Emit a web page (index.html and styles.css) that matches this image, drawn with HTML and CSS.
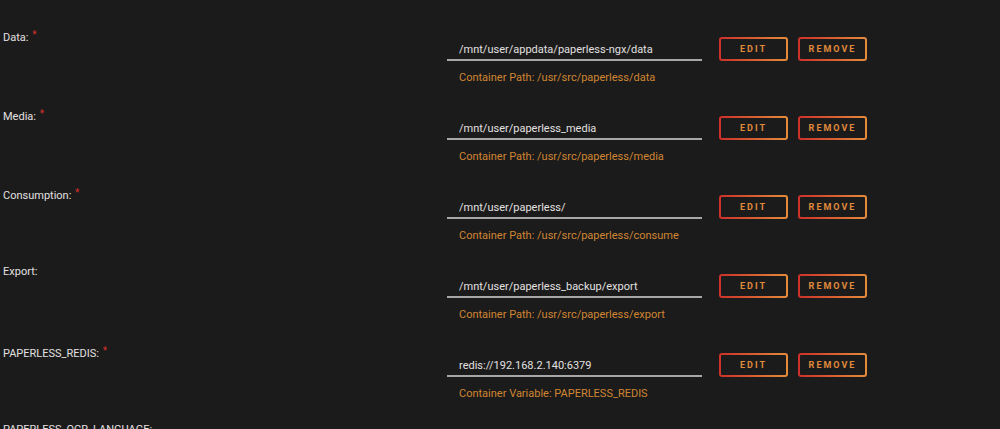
FILE: index.html
```html
<!DOCTYPE html>
<html>
<head>
	<title>Paperless-ngx - Update Container</title>
	<meta charset="utf-8">
	<link rel="stylesheet" href="styles.css">
</head>
<body>

<div id="wrapper">

	<div class="row first">
		<div class="lbl"></div>
		<div class="field">
			<div class="help">Container Port: 8000</div>
		</div>
	</div>

	<div class="row">
		<div class="lbl">Data: <span class="req">*</span></div>
		<div class="field">
			<div class="line">
				<input type="text" value="/mnt/user/appdata/paperless-ngx/data"/>
				<button class="btn">Edit</button>
				<button class="btn">Remove</button>
			</div>
			<div class="help">Container Path: /usr/src/paperless/data</div>
		</div>
	</div>

	<div class="row">
		<div class="lbl">Media: <span class="req">*</span></div>
		<div class="field">
			<div class="line">
				<input type="text" value="/mnt/user/paperless_media"/>
				<button class="btn">Edit</button>
				<button class="btn">Remove</button>
			</div>
			<div class="help">Container Path: /usr/src/paperless/media</div>
		</div>
	</div>

	<div class="row">
		<div class="lbl">Consumption: <span class="req">*</span></div>
		<div class="field">
			<div class="line">
				<input type="text" value="/mnt/user/paperless/"/>
				<button class="btn">Edit</button>
				<button class="btn">Remove</button>
			</div>
			<div class="help">Container Path: /usr/src/paperless/consume</div>
		</div>
	</div>

	<div class="row">
		<div class="lbl">Export:</div>
		<div class="field">
			<div class="line">
				<input type="text" value="/mnt/user/paperless_backup/export"/>
				<button class="btn">Edit</button>
				<button class="btn">Remove</button>
			</div>
			<div class="help">Container Path: /usr/src/paperless/export</div>
		</div>
	</div>

	<div class="row">
		<div class="lbl">PAPERLESS_REDIS: <span class="req">*</span></div>
		<div class="field">
			<div class="line">
				<input type="text" value="redis://192.168.2.140:6379"/>
				<button class="btn">Edit</button>
				<button class="btn">Remove</button>
			</div>
			<div class="help">Container Variable: PAPERLESS_REDIS</div>
		</div>
	</div>

	<div class="row">
		<div class="lbl">PAPERLESS_OCR_LANGUAGE:</div>
		<div class="field"></div>
	</div>

</div>

</body>
</html>
```

FILE: styles.css
```css
body {
	margin: 0;
	background: #1c1b1b;
	color: #e2e0e0;
	font-family: Roboto, "Noto Sans", sans-serif;
	font-size: 11px;
	overflow: hidden;
}
#wrapper{
	padding-left: 3px;
}

.row{
	display: flex;
	flex-direction: row;
	height: 79px;
}
.row.first{
	height: 29px;
}
.lbl{
	width: 444px;
	flex-shrink: 0;
	line-height: 12px;
}
.req{
	color: #d8302b;
	font-size: 10px;
	vertical-align: 3px;
	margin-left: 1px;
}
.field{
	padding-top: 8px;
}
.line{
	display: flex;
	flex-direction: row;
	align-items: center;
	height: 24px;
}
.line input{
	box-sizing: border-box;
	width: 255px;
	height: 24px;
	padding: 3px 0 0 12px;
	margin: 0 17px 0 0;
	border: none;
	border-bottom: 2px solid #a8a7a7;
	background: transparent;
	color: #e2e0e0;
	font-family: inherit;
	font-size: 11px;
	outline: none;
}
/* gradient border, red to orange */
.btn{
	box-sizing: border-box;
	width: 69px;
	height: 24px;
	margin: 0 10px 0 0;
	padding: 0;
	border: 2px solid transparent;
	border-radius: 3px;
	background: linear-gradient(#1c1b1b, #1c1b1b) padding-box,
		linear-gradient(90deg, #cd302a 0, #e48c3a) border-box;
	color: #e08b3b;
	font-family: inherit;
	font-size: 9px;
	font-weight: bold;
	letter-spacing: 2px;
	text-transform: uppercase;
	cursor: pointer;
}
.help{
	margin-top: 10px;
	padding-left: 12px;
	line-height: 14px;
	color: #d08633;
}
.first .field{
	padding-top: 0;
}
.first .help{
	margin-top: -10px;
}
```
